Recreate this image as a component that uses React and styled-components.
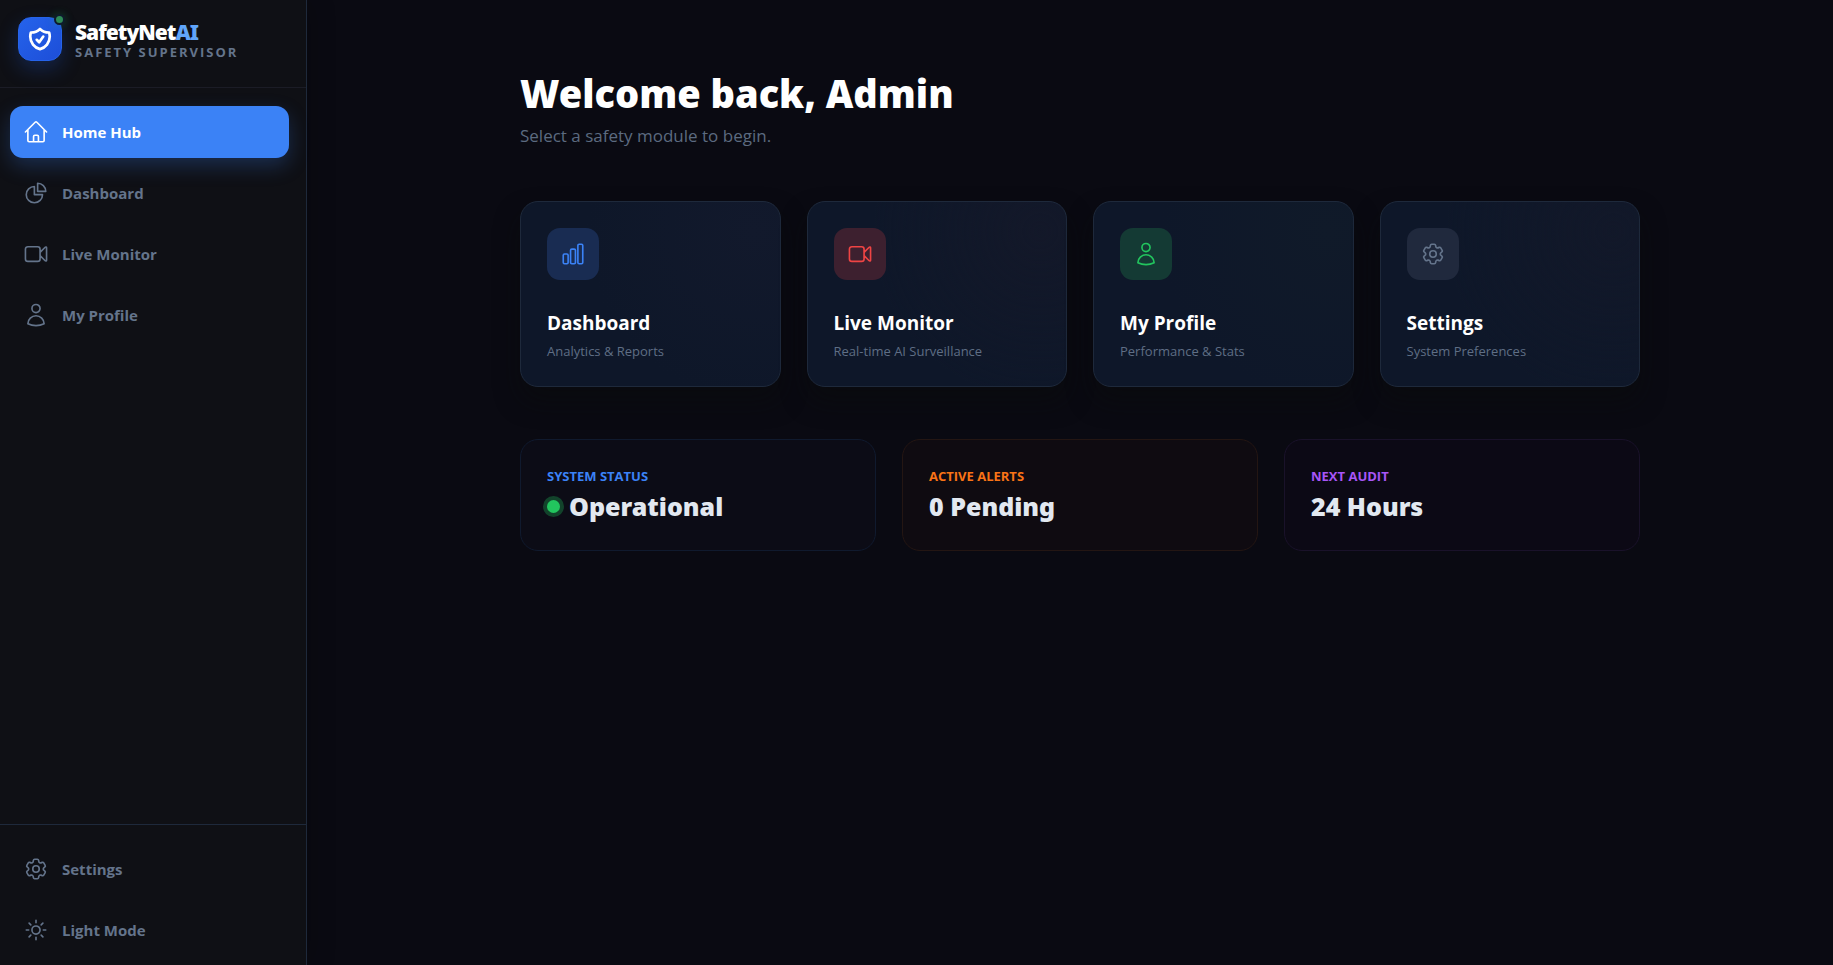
import React, { useState } from "react";
import styled, { createGlobalStyle } from "styled-components";
import {
  HiOutlineChartBar,
  HiOutlineChartPie,
  HiOutlineCog6Tooth,
  HiOutlineHome,
  HiOutlineShieldCheck,
  HiOutlineSun,
  HiOutlineUser,
  HiOutlineVideoCamera,
} from "react-icons/hi2";

const headingFont = `"Segoe UI", "Noto Sans", "Open Sans", sans-serif`;

const GlobalStyle = createGlobalStyle`
  * {
    box-sizing: border-box;
  }

  body {
    margin: 0;
    background: #0a0a12;
    color: #fff;
    font-family: "Segoe UI", "Open Sans", "Noto Sans", sans-serif;
  }

  h1, h2, p {
    margin: 0;
  }
`;

const Layout = styled.div`
  display: flex;
  min-height: 100vh;
`;

const Sidebar = styled.aside`
  position: sticky;
  top: 0;
  flex: 0 0 307px;
  height: 100vh;
  display: flex;
  flex-direction: column;
  background: #0f1015;
  border-right: 1px solid #1e293b;
  box-shadow: 4px 0 24px rgba(0, 0, 0, 0.2);
`;

const Brand = styled.div`
  display: flex;
  align-items: flex-start;
  gap: 13px;
  height: 88px;
  padding: 17px 18px 0;
  border-bottom: 1px solid #1b1c26;
`;

const Logo = styled.div`
  position: relative;
  display: flex;
  align-items: center;
  justify-content: center;
  width: 44px;
  height: 44px;
  border: 1px solid #2563eb;
  border-radius: 13px;
  background: linear-gradient(135deg, #2563eb, #1d4ed8);
  box-shadow: 0 8px 20px rgba(37, 99, 235, 0.25);

  svg {
    width: 26px;
    height: 26px;
    stroke-width: 2.5;
  }
`;

const OnlineDot = styled.span`
  position: absolute;
  top: -4px;
  right: -4px;
  width: 11px;
  height: 11px;
  border: 2px solid #0f1a2c;
  border-radius: 50%;
  background: #2e8b57;
  box-shadow: 0 0 10px rgba(34, 197, 94, 0.3);
`;

const BrandName = styled.div`
  padding-top: 4px;
  font-family: ${headingFont};
  font-size: 21px;
  font-weight: 900;
  line-height: 22px;
  letter-spacing: -1px;

  span {
    color: #60a5fa;
  }
`;

const BrandTag = styled.div`
  font-size: 13px;
  font-weight: 700;
  line-height: 18px;
  letter-spacing: 2px;
  color: #64748b;
`;

const Nav = styled.nav`
  flex: 1;
  display: flex;
  flex-direction: column;
  gap: 9px;
  padding: 18px 17px 18px 10px;
`;

const SidebarFooter = styled.div`
  display: flex;
  flex-direction: column;
  gap: 9px;
  padding: 18px 17px 9px 10px;
  border-top: 1px solid #1e293b;
`;

const NavButton = styled.button`
  display: flex;
  align-items: center;
  gap: 13px;
  height: 52px;
  padding: 0 13px;
  border: none;
  border-radius: 13px;
  background: ${(props) => (props.$active ? "#3b82f6" : "transparent")};
  color: ${(props) => (props.$active ? "#fff" : "#64748b")};
  box-shadow: ${(props) => (props.$active ? "0 8px 20px rgba(59, 130, 246, 0.25)" : "none")};
  font-family: inherit;
  font-size: 15px;
  font-weight: 700;
  text-align: left;
  cursor: pointer;

  svg {
    width: 26px;
    height: 26px;
  }
`;

const Main = styled.main`
  flex: 1;
  padding: 67px 40px 40px 60px;
`;

const Content = styled.div`
  max-width: 1120px;
  margin: 0 auto;
`;

const Title = styled.h1`
  font-family: ${headingFont};
  font-size: 38px;
  font-weight: 900;
  line-height: 52px;
`;

const Subtitle = styled.p`
  padding-top: 4px;
  font-size: 17px;
  font-weight: 400;
  line-height: 26px;
  color: #5c6a80;
`;

const ModuleGrid = styled.div`
  display: grid;
  grid-template-columns: repeat(4, 1fr);
  gap: 26px;
  margin-top: 52px;
`;

const ModuleCard = styled.button`
  display: flex;
  flex-direction: column;
  align-items: flex-start;
  padding: 26px 26px 24px;
  border: 1px solid #1e293b;
  border-radius: 18px;
  background: radial-gradient(circle at 90% 16%, ${(props) => props.$glow}, transparent 60%), #0e1729;
  box-shadow: 0 14px 24px rgba(9, 12, 12, 0.5);
  color: #fff;
  font-family: inherit;
  text-align: left;
  cursor: pointer;
`;

const ModuleIcon = styled.span`
  display: flex;
  align-items: center;
  justify-content: center;
  width: 52px;
  height: 52px;
  border-radius: 13px;
  background: ${(props) => props.$tint};
  color: ${(props) => props.$color};

  svg {
    width: 26px;
    height: 26px;
  }
`;

const ModuleName = styled.span`
  margin-top: 29px;
  font-size: 19px;
  font-weight: 700;
  line-height: 28px;
`;

const ModuleText = styled.span`
  margin-top: 4px;
  font-size: 13px;
  line-height: 21px;
  color: #5f6e85;
`;

const StatusGrid = styled.div`
  display: grid;
  grid-template-columns: repeat(3, 1fr);
  gap: 26px;
  margin-top: 52px;
`;

const StatusCard = styled.section`
  padding: 26px;
  border: 1px solid ${(props) => props.$border};
  border-radius: 18px;
  background: ${(props) => props.$background};
`;

const StatusLabel = styled.h2`
  font-size: 13px;
  font-weight: 700;
  line-height: 20px;
  color: ${(props) => props.$color};
`;

const StatusValue = styled.p`
  display: flex;
  align-items: center;
  gap: 9px;
  padding: 3px 0 1px;
  font-family: ${headingFont};
  font-size: 25px;
  font-weight: 900;
  line-height: 34px;
  color: #e2e8f0;
`;

const PulseDot = styled.span`
  width: 13px;
  height: 13px;
  border-radius: 50%;
  background: #22c55e;
  box-shadow: 0 0 0 4px rgba(34, 197, 94, 0.3);
`;

const navItems = [
  { name: "Home Hub", icon: <HiOutlineHome /> },
  { name: "Dashboard", icon: <HiOutlineChartPie /> },
  { name: "Live Monitor", icon: <HiOutlineVideoCamera /> },
  { name: "My Profile", icon: <HiOutlineUser /> },
];

const modules = [
  {
    name: "Dashboard",
    text: "Analytics & Reports",
    icon: <HiOutlineChartBar />,
    color: "#3b82f6",
    tint: "#192c52",
    glow: "#12192c",
  },
  {
    name: "Live Monitor",
    text: "Real-time AI Surveillance",
    icon: <HiOutlineVideoCamera />,
    color: "#ef4444",
    tint: "#3d202f",
    glow: "#131829",
  },
  {
    name: "My Profile",
    text: "Performance & Stats",
    icon: <HiOutlineUser />,
    color: "#22c55e",
    tint: "#143a34",
    glow: "#101a29",
  },
  {
    name: "Settings",
    text: "System Preferences",
    icon: <HiOutlineCog6Tooth />,
    color: "#64748b",
    tint: "#20293d",
    glow: "#121829",
  },
];

const App = () => {
  const [page, setPage] = useState("Home Hub");

  return (
    <>
      <GlobalStyle />
      <Layout>
        <Sidebar>
          <Brand>
            <Logo>
              <HiOutlineShieldCheck />
              <OnlineDot />
            </Logo>
            <div>
              <BrandName>
                SafetyNet<span>AI</span>
              </BrandName>
              <BrandTag>SAFETY SUPERVISOR</BrandTag>
            </div>
          </Brand>
          <Nav>
            {navItems.map((item) => (
              <NavButton key={item.name} $active={page === item.name} onClick={() => setPage(item.name)}>
                {item.icon}
                {item.name}
              </NavButton>
            ))}
          </Nav>
          <SidebarFooter>
            <NavButton $active={page === "Settings"} onClick={() => setPage("Settings")}>
              <HiOutlineCog6Tooth />
              Settings
            </NavButton>
            <NavButton>
              <HiOutlineSun />
              Light Mode
            </NavButton>
          </SidebarFooter>
        </Sidebar>

        <Main>
          <Content>
            <Title>Welcome back, Admin</Title>
            <Subtitle>Select a safety module to begin.</Subtitle>

            <ModuleGrid>
              {modules.map((item) => (
                <ModuleCard key={item.name} $glow={item.glow} onClick={() => setPage(item.name)}>
                  <ModuleIcon $tint={item.tint} $color={item.color}>
                    {item.icon}
                  </ModuleIcon>
                  <ModuleName>{item.name}</ModuleName>
                  <ModuleText>{item.text}</ModuleText>
                </ModuleCard>
              ))}
            </ModuleGrid>

            <StatusGrid>
              <StatusCard $background="#0c0c16" $border="#101a2e">
                <StatusLabel $color="#3b82f6">SYSTEM STATUS</StatusLabel>
                <StatusValue>
                  <PulseDot />
                  Operational
                </StatusValue>
              </StatusCard>
              <StatusCard $background="#0f0b11" $border="#241613">
                <StatusLabel $color="#f97316">ACTIVE ALERTS</StatusLabel>
                <StatusValue>0 Pending</StatusValue>
              </StatusCard>
              <StatusCard $background="#0c0915" $border="#1a122a">
                <StatusLabel $color="#a855f7">NEXT AUDIT</StatusLabel>
                <StatusValue>24 Hours</StatusValue>
              </StatusCard>
            </StatusGrid>
          </Content>
        </Main>
      </Layout>
    </>
  );
};

export default App;
